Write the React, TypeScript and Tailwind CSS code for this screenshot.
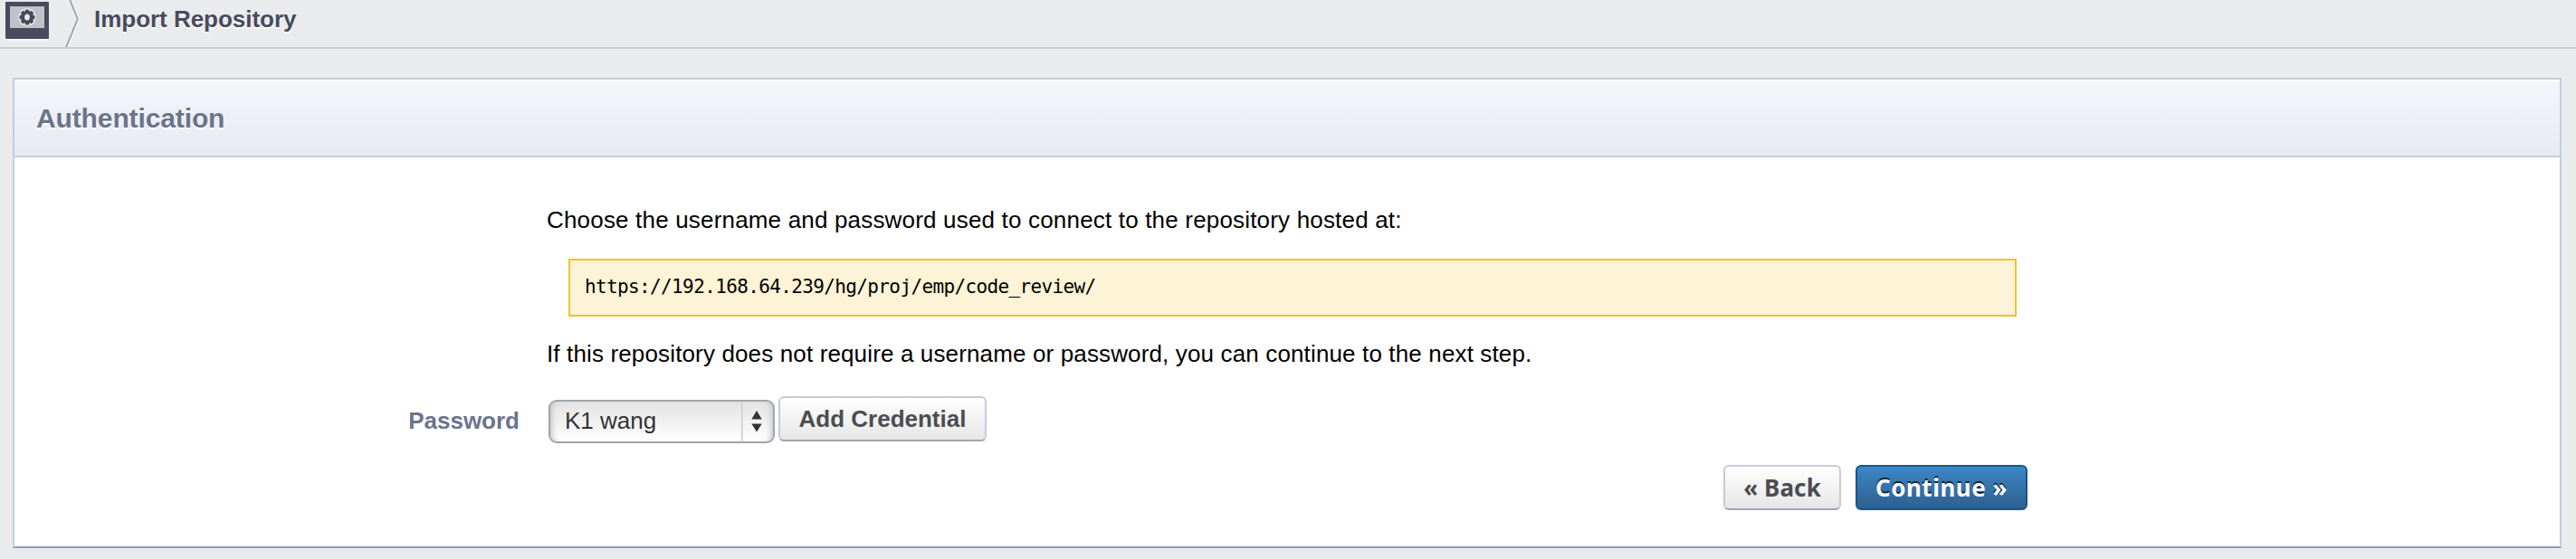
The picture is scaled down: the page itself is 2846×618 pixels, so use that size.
const teeth = [0, 45, 90, 135];

function GearBadge() {
  return (
    <svg width="48" height="44" viewBox="0 0 48 44" className="block">
      <rect x="0.5" y="2" width="47" height="40.6" rx="1" fill="#fff" />
      <rect width="48" height="41" rx="1" fill="#474b5c" />
      <rect x="5" y="5" width="38" height="24" fill="#bfc1c7" />
      <g transform="translate(24 17)">
        <g fill="#f4f5f7" stroke="#f4f5f7" strokeWidth="2.4" strokeLinejoin="round">
          <circle r="7.1" />
          {teeth.map((a) => (
            <rect key={a} x="-2.2" y="-8.6" width="4.4" height="17.2" rx="1.2" transform={`rotate(${a})`} />
          ))}
        </g>
        <g fill="#474b5c">
          <circle r="7.1" />
          {teeth.map((a) => (
            <rect key={a} x="-2.2" y="-8.6" width="4.4" height="17.2" rx="1.2" transform={`rotate(${a})`} />
          ))}
        </g>
        <ellipse rx="2.9" ry="3.6" fill="#e9eaed" />
      </g>
    </svg>
  );
}

function Crumbs() {
  return (
    <header className="flex h-[54px] items-start border-b-2 border-[#cbccce] pl-[6px]">
      <div className="pt-[2px]">
        <GearBadge />
      </div>
      <svg width="18" height="52" viewBox="0 0 18 52" className="ml-[17px] block" fill="none">
        <path d="M6 -1L14.8 21L1.8 53" stroke="#fff" strokeWidth="2" transform="translate(1.5 0)" opacity="0.5" />
        <path d="M6 -1L14.8 21L1.8 53" stroke="#9d9fa2" strokeWidth="1.8" />
      </svg>
      <h1 className="ml-[15px] text-[26px] leading-[42px] font-bold tracking-[-0.03px] text-[#474b5c] [text-shadow:0_2px_0_#fff]">
        Import Repository
      </h1>
    </header>
  );
}

const greyButton =
  "h-[50px] rounded-[6px] border-2 border-[#c7cad9] border-b-[#a1a4b3] bg-linear-to-b from-white to-[#e6e6e6] text-[26px] font-bold text-[#4b4d51] whitespace-nowrap";

export default function App() {
  return (
    <div className="h-[618px] w-[2846px] overflow-hidden bg-[#eaebed] font-['Liberation_Sans',Arial,sans-serif]">
      <Crumbs />
      <main className="mt-[32px] ml-[14px] h-[520px] w-[2816px] border-2 border-[#bfcfda] border-b-[#8c9cbb] bg-white">
        <div className="h-[86px] border-b-2 border-[#bfcfda] bg-linear-to-b from-[#f4f6fb] to-[#e7eaef] pl-[24px] shadow-[inset_0_2px_0_#fcfdfe]">
          <h2 className="text-[30px] leading-[86px] font-bold tracking-[-0.12px] text-[#6b748c] [text-shadow:0_2px_0_#fff]">
            Authentication
          </h2>
        </div>
        <div className="pt-[49px] pl-[588px] text-[26px] leading-[40px] text-black">
          <p className="tracking-[0.18px]">
            Choose the username and password used to connect to the repository hosted at:
          </p>
          <div className="mt-[23px] ml-[24px] h-[64px] w-[1600px] border-2 border-[#f1c232] bg-[#fdf3d6] pl-[16px] font-['DejaVu_Sans_Mono',monospace] text-[21px] leading-[58px] tracking-[-0.63px]">
            https://192.168.64.239/hg/proj/emp/code_review/
          </div>
          <p className="mt-[21px] tracking-[0.14px]">
            If this repository does not require a username or password, you can continue to the next step.
          </p>
        </div>
        <div className="mt-[27px] flex h-[52px] items-start">
          <label className="mt-[6px] w-[558px] text-right text-[26px] leading-[42px] font-bold text-[#6b748c]">
            Password
          </label>
          <button className="mt-[4px] ml-[32px] flex h-[48px] w-[250px] items-stretch rounded-[9px] border-2 border-[#a0a4ab] bg-linear-to-b from-[#e3e3e3] to-white text-left text-[26px] text-[#333] shadow-[inset_7px_0_6px_-5px_#c4c4c4,inset_-7px_0_6px_-5px_#c4c4c4]">
            <span className="w-[211px] pl-[16px] leading-[42px]">K1 wang</span>
            <svg width="34" height="44" viewBox="0 0 34 44" className="block">
              <path d="M0.8 0V44" stroke="#cfcfcf" strokeWidth="1.6" />
              <path d="M17 10L22.7 19.5H11.3Z M17 33.5L22.7 24.5H11.3Z" fill="#333" />
            </svg>
          </button>
          <button className={`${greyButton} ml-[4px] w-[230px] leading-[46px]`}>Add Credential</button>
        </div>
        <div className="mt-[24px] flex w-[2224px] justify-end gap-[16px] font-['Noto_Sans',sans-serif]">
          <button className={`${greyButton} w-[130px] leading-[44px] tracking-[0.1px]`}>« Back</button>
          <button className="h-[50px] w-[190px] rounded-[6px] border-2 border-[#19558d] bg-linear-to-b from-[#3b87c5] to-[#2f608f] text-[26px] leading-[44px] font-bold tracking-[0.5px] whitespace-nowrap text-white [text-shadow:0_-2px_0_#10253a]">
            Continue »
          </button>
        </div>
      </main>
    </div>
  );
}
